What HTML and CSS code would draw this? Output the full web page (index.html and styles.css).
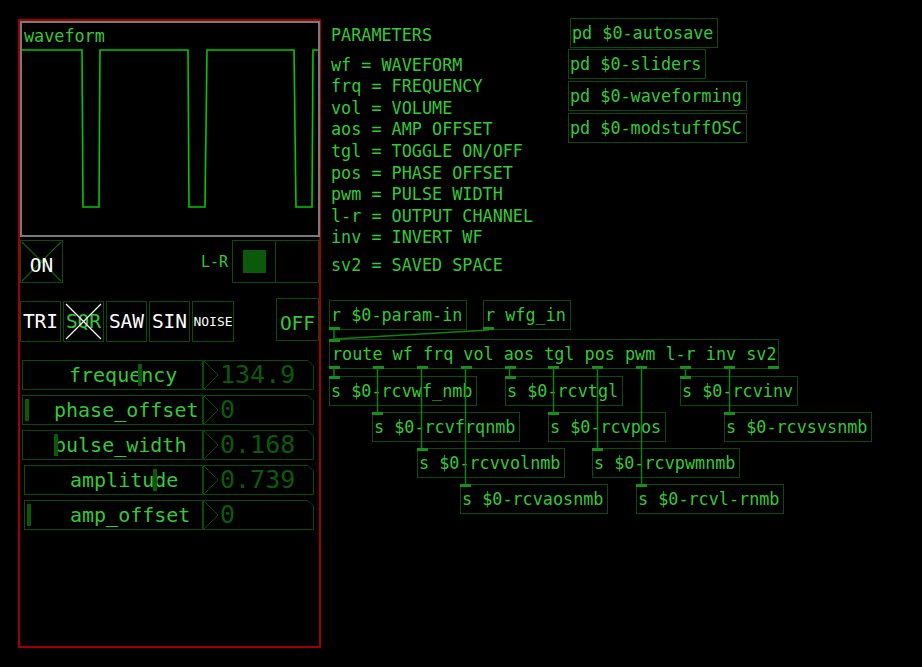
FILE: index.html
```html
<!DOCTYPE html>
<html>
<head>
<meta charset="utf-8">
<title>Pd patch</title>
<link rel="stylesheet" href="styles.css">
</head>
<body>
<div class="canvas">

  <div class="gop">
    <div class="graph">
      <svg class="wave" viewBox="22 23 296 212" preserveAspectRatio="none">
        <polyline points="20,50 82,50 83,207 99,207 100,50 188,50 189,207 205,207 207,50 294,50 296,207 312,207 313,50 320,50"/>
      </svg>
      <span class="graph-label">waveform</span>
    </div>

    <div class="row-top">
      <div class="tgl tgl-on">
        <svg class="tgl-x" viewBox="0 0 41 41"><path d="M1 1L40 40M40 1L1 40"/></svg>
        <span class="tgl-text">ON</span>
      </div>
      <div class="lr">
        <span class="lr-label">L-R</span>
        <div class="radio">
          <div class="cell"><i class="dot"></i></div>
          <div class="cell cell-2"></div>
        </div>
      </div>
    </div>

    <div class="row-wave">
      <div class="wave-btns">
        <div class="btn">TRI</div>
        <div class="btn btn-sel">
          <svg class="btn-x" viewBox="0 0 39 39"><path d="M2 2L37 37M37 2L2 37"/></svg>
          <span class="btn-text">SQR</span>
        </div>
        <div class="btn">SAW</div>
        <div class="btn">SIN</div>
        <div class="btn btn-noise">NOISE</div>
      </div>
      <div class="tgl tgl-off"><span class="tgl-text">OFF</span></div>
    </div>

    <div class="sliders">
      <div class="srow">
        <div class="slider"><span class="slabel lab-freq">frequency</span><span class="knob" style="left:115px"></span></div>
        <div class="numbox"><svg class="nb-frame" viewBox="0 0 111 30"><path d="M0.5 0.5H105L110.5 6V29.5H0.5Z M0.5 0.5L15 15L0.5 29.5"/></svg><span class="numval">134.9</span></div>
      </div>
      <div class="srow">
        <div class="slider"><span class="slabel lab-phase">phase_offset</span><span class="knob" style="left:2px"></span></div>
        <div class="numbox"><svg class="nb-frame" viewBox="0 0 111 30"><path d="M0.5 0.5H105L110.5 6V29.5H0.5Z M0.5 0.5L15 15L0.5 29.5"/></svg><span class="numval">0</span></div>
      </div>
      <div class="srow">
        <div class="slider"><span class="slabel lab-phase">pulse_width</span><span class="knob" style="left:31px"></span></div>
        <div class="numbox"><svg class="nb-frame" viewBox="0 0 111 30"><path d="M0.5 0.5H105L110.5 6V29.5H0.5Z M0.5 0.5L15 15L0.5 29.5"/></svg><span class="numval">0.168</span></div>
      </div>
      <div class="srow srow-in">
        <div class="slider"><span class="slabel lab-amp">amplitude</span><span class="knob" style="left:128px"></span></div>
        <div class="numbox"><svg class="nb-frame" viewBox="0 0 111 30"><path d="M0.5 0.5H105L110.5 6V29.5H0.5Z M0.5 0.5L15 15L0.5 29.5"/></svg><span class="numval">0.739</span></div>
      </div>
      <div class="srow srow-in">
        <div class="slider"><span class="slabel lab-amp">amp_offset</span><span class="knob" style="left:2px"></span></div>
        <div class="numbox"><svg class="nb-frame" viewBox="0 0 111 30"><path d="M0.5 0.5H105L110.5 6V29.5H0.5Z M0.5 0.5L15 15L0.5 29.5"/></svg><span class="numval">0</span></div>
      </div>
    </div>
  </div>

  <div class="comments">
    <div class="cmt">PARAMETERS</div>
    <div class="cmt cmt-list">wf = WAVEFORM<br>frq = FREQUENCY<br>vol = VOLUME<br>aos = AMP OFFSET<br>tgl = TOGGLE ON/OFF<br>pos = PHASE OFFSET<br>pwm = PULSE WIDTH<br>l-r = OUTPUT CHANNEL<br>inv = INVERT WF</div>
    <div class="cmt cmt-last">sv2 = SAVED SPACE</div>
  </div>

  <div class="obj pd-autosave">pd $0-autosave</div>
  <div class="obj pd-sliders">pd $0-sliders</div>
  <div class="obj pd-waveforming">pd $0-waveforming</div>
  <div class="obj pd-mod">pd $0-modstuffOSC</div>

  <div class="obj r-param">r $0-param-in<i class="outlet"></i></div>
  <div class="obj r-wfg">r wfg_in<i class="outlet"></i></div>

  <div class="obj route"><i class="inlet"></i><span class="obj-text">route wf frq vol aos tgl pos pwm l-r inv sv2</span><span class="outlets"><i></i><i></i><i></i><i></i><i></i><i></i><i></i><i></i><i></i><i></i><i></i></span></div>

  <div class="obj s-wf"><i class="inlet"></i>s $0-rcvwf_nmb</div>
  <div class="obj s-tgl"><i class="inlet"></i>s $0-rcvtgl</div>
  <div class="obj s-inv"><i class="inlet"></i>s $0-rcvinv</div>
  <div class="obj s-frq"><i class="inlet"></i>s $0-rcvfrqnmb</div>
  <div class="obj s-pos"><i class="inlet"></i>s $0-rcvpos</div>
  <div class="obj s-svs"><i class="inlet"></i>s $0-rcvsvsnmb</div>
  <div class="obj s-vol"><i class="inlet"></i>s $0-rcvvolnmb</div>
  <div class="obj s-pwm"><i class="inlet"></i>s $0-rcvpwmnmb</div>
  <div class="obj s-aos"><i class="inlet"></i>s $0-rcvaosnmb</div>
  <div class="obj s-lr"><i class="inlet"></i>s $0-rcvl-rnmb</div>

  <svg class="wires" viewBox="0 0 922 667">
    <path d="M334 330V339"/>
    <path d="M489 330L335 339"/>
    <path d="M334 368V376"/>
    <path d="M377.5 368V412"/>
    <path d="M421.5 368V448"/>
    <path d="M465.5 368V484"/>
    <path d="M509.5 368V376"/>
    <path d="M553.5 368V412"/>
    <path d="M597.5 368V448"/>
    <path d="M641.5 368V484"/>
    <path d="M685.5 368V376"/>
    <path d="M729.5 368V412"/>
  </svg>
</div>
</body>
</html>
```

FILE: styles.css
```css
* { box-sizing: border-box; }

html, body {
  margin: 0;
  padding: 0;
  background: #000;
}

body {
  width: 922px;
  height: 667px;
  overflow: hidden;
  font-family: "DejaVu Sans Mono", "Liberation Mono", monospace;
  color: #36c836;
}

.canvas {
  position: relative;
  width: 922px;
  height: 667px;
}

/* ---------- graph-on-parent panel ---------- */
.gop {
  position: absolute;
  left: 18px;
  top: 19px;
  width: 303px;
  height: 629px;
  border: 2px solid #a00000;
  display: flex;
  flex-direction: column;
}

.graph {
  position: relative;
  flex: none;
  width: 300px;
  height: 216px;
  border: 2px solid #7a7a7a;
}

.wave {
  position: absolute;
  inset: 0;
  width: 100%;
  height: 100%;
}

.wave polyline {
  fill: none;
  stroke: #00c800;
  stroke-width: 1.6;
}

.graph-label {
  position: absolute;
  left: 2px;
  top: 3px;
  font-size: 16.8px;
  line-height: 20px;
}

/* toggles row */
.row-top {
  display: flex;
  justify-content: space-between;
  align-items: center;
  margin-top: 3px;
  height: 43px;
  flex: none;
}

.tgl {
  position: relative;
  width: 43px;
  height: 43px;
  border: 1px solid #0b4a0b;
  display: flex;
  align-items: center;
  justify-content: center;
  flex: none;
}

.tgl-x {
  position: absolute;
  inset: 0;
  width: 100%;
  height: 100%;
}

.tgl-x path {
  stroke: #0d650d;
  stroke-width: 1.2;
  fill: none;
}

.tgl-text {
  position: relative;
  font-size: 19.5px;
  padding-top: 8px;
}

.tgl-on .tgl-text { color: #fff; }
.tgl-off .tgl-text { color: #36c836; }

.lr {
  display: flex;
  align-items: center;
}

.lr-label {
  font-size: 15px;
  margin-right: 4px;
}

.radio {
  display: flex;
}

.cell {
  width: 44px;
  height: 43px;
  border: 1px solid #0b4a0b;
  display: flex;
  align-items: center;
  justify-content: center;
}

.cell-2 {
  margin-left: -1px;
}

.dot {
  display: block;
  width: 23px;
  height: 23px;
  background: #0b5a0b;
}

/* waveform selector row */
.row-wave {
  display: flex;
  justify-content: space-between;
  align-items: flex-start;
  margin-top: 15px;
  flex: none;
}

.wave-btns {
  display: flex;
  gap: 2px;
  margin-top: 3px;
}

.btn {
  position: relative;
  width: 41px;
  height: 41px;
  border: 1px solid #0b4a0b;
  display: flex;
  align-items: center;
  justify-content: center;
  color: #fff;
  font-size: 19.5px;
}

.btn-noise {
  width: 42px;
  font-size: 13px;
}

.btn-sel .btn-text {
  position: relative;
  color: #36c836;
}

.btn-x {
  position: absolute;
  inset: 0;
  width: 100%;
  height: 100%;
  z-index: 1;
}

.btn-x path {
  stroke: #fff;
  stroke-width: 1.2;
  fill: none;
}

/* sliders */
.sliders {
  display: flex;
  flex-direction: column;
  gap: 5px;
  margin-top: 18px;
}

.srow {
  display: flex;
  height: 30px;
  margin-left: 2px;
}

.srow-in {
  margin-left: 4px;
}

.slider {
  position: relative;
  width: 181px;
  height: 30px;
  border: 1px solid #0b4a0b;
  display: flex;
  align-items: center;
  font-size: 20px;
}

.srow-in .slider {
  width: 179px;
}

.slabel { white-space: pre; }
.lab-freq { padding-left: 46px; }
.lab-phase { padding-left: 31px; }
.lab-amp { padding-left: 45px; }

.knob {
  position: absolute;
  top: 3px;
  bottom: 3px;
  width: 4px;
  background: #0b5a0b;
}

.numbox {
  position: relative;
  width: 111px;
  height: 30px;
}

.nb-frame {
  position: absolute;
  inset: 0;
  width: 100%;
  height: 100%;
}

.nb-frame path {
  fill: none;
  stroke: #0b4a0b;
  stroke-width: 1;
}

.numval {
  position: absolute;
  left: 17px;
  top: 0;
  line-height: 30px;
  font-size: 25px;
  color: #0b5a0b;
}

/* ---------- comments ---------- */
.comments {
  position: absolute;
  left: 331px;
  top: 25px;
  display: flex;
  flex-direction: column;
  font-size: 16.8px;
  line-height: 21.6px;
  white-space: nowrap;
}

.cmt-list { margin-top: 8px; }
.cmt-last { margin-top: 5.6px; }

/* ---------- patch objects ---------- */
.obj {
  position: absolute;
  height: 30px;
  border: 1px solid #0b4a0b;
  padding: 0 4px 0 1px;
  display: flex;
  align-items: center;
  font-size: 16.8px;
  white-space: nowrap;
}

.obj-text {
  padding-left: 2px;
}

.inlet, .outlet {
  position: absolute;
  left: -1px;
  width: 11px;
  height: 3px;
  background: #169016;
}

.inlet { top: -1px; }
.outlet { bottom: -1px; }

.outlets {
  position: absolute;
  left: -1px;
  right: -1px;
  bottom: -1px;
  height: 3px;
  display: flex;
  justify-content: space-between;
}

.outlets i {
  width: 11px;
  height: 3px;
  background: #169016;
}

.pd-autosave { left: 570px; top: 18px; }
.pd-sliders { left: 568px; top: 49px; }
.pd-waveforming { left: 568px; top: 81px; }
.pd-mod { left: 568px; top: 113px; }

.r-param { left: 329px; top: 300px; }
.r-wfg { left: 483px; top: 300px; }

.route { left: 329px; top: 339px; width: 450px; padding-left: 0; }

.s-wf { left: 329px; top: 376px; }
.s-tgl { left: 505px; top: 376px; }
.s-inv { left: 680px; top: 376px; }
.s-frq { left: 372px; top: 412px; }
.s-pos { left: 548px; top: 412px; }
.s-svs { left: 724px; top: 412px; }
.s-vol { left: 417px; top: 448px; }
.s-pwm { left: 592px; top: 448px; }
.s-aos { left: 460px; top: 484px; }
.s-lr { left: 636px; top: 484px; }

.wires {
  position: absolute;
  left: 0;
  top: 0;
  width: 922px;
  height: 667px;
  pointer-events: none;
  z-index: 2;
}

.wires path {
  fill: none;
  stroke: #118011;
  stroke-width: 1.5;
}
```
